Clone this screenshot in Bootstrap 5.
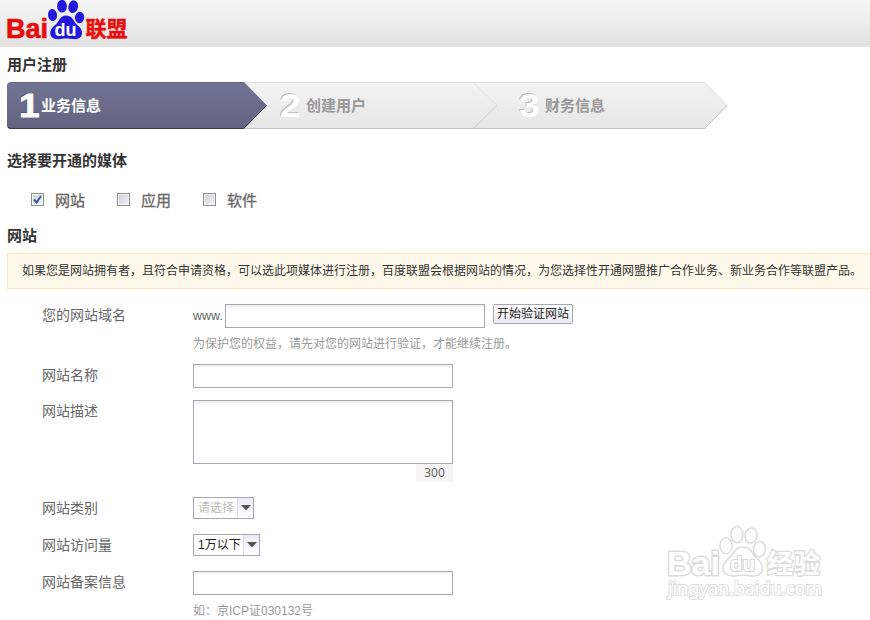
<!DOCTYPE html>
<html lang="zh-CN">
<head>
<meta charset="utf-8">
<title>百度联盟 - 用户注册</title>
<link href="https://cdn.jsdelivr.net/npm/bootstrap@5.3.0/dist/css/bootstrap.min.css" rel="stylesheet">
<style>
body{font-family:"Liberation Sans","Noto Sans CJK SC",sans-serif;font-size:12px;line-height:18px;color:#333;background:#fff;overflow:hidden;height:620px}
.masthead{height:47px;background:linear-gradient(#f6f6f6,#e2e2e2)}
.masthead svg,.watermark svg,.steps svg{display:block}
.page-body{padding-left:7px}
.heading{font-size:15px;line-height:20px;font-weight:700;margin:0;color:#333}
.page-title{padding-top:8px}
.steps{width:721px;height:47px;margin-top:7px}
.steps>*{grid-area:1/1}
.step-labels{height:47px;font-size:15px;font-weight:700;color:#999}
.step-item{height:47px;width:239px}
.step-item.current{width:273px;padding-left:12px;color:#fff}
.step-num{font-size:33px;line-height:47px;font-weight:700;width:26px;transform:scaleX(1.12);transform-origin:left;color:#fff;text-shadow:-1px -1px 0 #bbb}
.step-item.current .step-num{width:22px;-webkit-text-stroke:.8px #fff;text-shadow:-1px -1px 0 #4c4e6c}
.media-list{padding-left:24px;margin-top:20px;height:20px}
.media-list label{width:86px;height:20px;font-size:15px;line-height:20px;color:#666;-webkit-text-stroke:.3px #666}
.box{width:13px;height:13px;margin:0 11px 3px 0;border:1px solid #8e8f8f;background:linear-gradient(135deg,#c8cdd6,#f6f6f6);box-shadow:inset 0 0 0 1px #f4f4f4;display:grid;place-items:center}
.notice{margin-top:7px;height:36px;background:#fff9ec;border:1px solid #f5e8b3;border-right:0;padding-left:14px;line-height:35px;white-space:nowrap}
.field-row{padding-left:35px;margin-top:15px}
.field-row.tight{margin-top:12px}
.field-name{width:151px;font-size:14px;line-height:22px;color:#666;flex:none}
.text-field{display:block;width:260px;height:24px;border:1px solid #a5a8b3;border-radius:0;background:#fff;box-shadow:inset 0 2px 1px #f1f1f2;padding:2px 5px;resize:none;outline:0}
.text-field.tall{height:64px}
.prefix{font-size:12.500px;line-height:24px;width:32px;color:#666}
.verify{height:20px;width:80px;margin-left:8px;padding:0;font-size:12px;line-height:18px;border:1px solid #a5a8b3;border-radius:2px;background:linear-gradient(#fff,#ebebee);color:#222}
.hint{color:#999;line-height:18px;height:17px;margin-top:7px}
.counter{width:37px;height:18px;background:#f4f4f4;color:#666;font-family:"Noto Sans",sans-serif;line-height:18px}
.picker{height:22px;width:67px;border:1px solid #a5a8b3;line-height:21px;padding-left:4px;color:#222}
.picker.empty{width:61px;color:#bbb}
.picker-arrow{width:16px;height:20px;border-left:1px solid #d7dae6;background:linear-gradient(#e8ebf7,#fff)}
.watermark{position:absolute;left:660px;top:520px}
</style>
<script src="https://cdn.jsdelivr.net/npm/bootstrap@5.3.0/dist/js/bootstrap.bundle.min.js"></script>
</head>
<body>
<header class="masthead">
<svg width="140" height="47" role="img" aria-label="百度联盟">
<g font-family="Liberation Sans, sans-serif" font-weight="700">
<text x="6" y="38" font-size="27.500" fill="#e60d0d" stroke="#e60d0d" stroke-width=".7" textLength="42" lengthAdjust="spacingAndGlyphs">Bai</text>
<g fill="#2319dc"><ellipse cx="52.500" cy="15" rx="4.500" ry="6" transform="rotate(-8 52.500 15)"/><ellipse cx="62" cy="6.200" rx="4.900" ry="6.300"/><ellipse cx="73.200" cy="6.700" rx="4.800" ry="6.400" transform="rotate(12 73.200 6.700)"/><ellipse cx="79.600" cy="17.500" rx="4.600" ry="5.700" transform="rotate(8 79.600 17.500)"/>
<path d="M66 15.500C71.500 15.500 73.500 20 75 22.500C77 25.500 82 27.500 82 33C82 37 79 39.200 75 39.200C71 39.200 69 38.500 66 38.500S62 39.200 58 39.200C53 39.200 50.300 37 50.300 33C50.300 27.500 55 26 57.500 22.500C59.500 19.500 61 15.500 66 15.500Z"/></g>
<text x="54.500" y="35.500" font-size="18.500" fill="#fff" textLength="22" lengthAdjust="spacingAndGlyphs">du</text></g>
<text x="85.500" y="36" font-family="Noto Sans CJK SC" font-weight="700" font-size="21" fill="#e60d0d" stroke="#e60d0d" stroke-width=".5" textLength="42">联盟</text>
</svg>
</header>
<main class="page-body">
<h1 class="heading page-title">用户注册</h1>
<div class="steps d-grid">
<svg width="721" height="48" aria-hidden="true">
<defs><linearGradient id="dim" x2="0" y2="1"><stop stop-color="#f3f3f3"/><stop offset="1" stop-color="#e6e6e6"/></linearGradient><linearGradient id="lit" x2="0" y2="1"><stop stop-color="#727494"/><stop offset="1" stop-color="#61637f"/></linearGradient></defs>
<path d="M230 0H698L720.500 23.500 698 47H230z" fill="url(#dim)"/>
<path d="M230 .5H697.500L720 23.500" fill="none" stroke="#e2e2e2"/><path d="M230 46.500H697.500L720 23.500" fill="none" stroke="#c4c4c4"/>
<path d="M467 1l23 22.500" fill="none" stroke="#e2e2e2"/><path d="M490 23.500L467 46" fill="none" stroke="#d0d0d0"/>
<path d="M4 0H237L260 23.500 237 47H4Q0 47 0 43V4Q0 0 4 0z" fill="url(#lit)"/>
<path d="M1 45Q2 46.500 4 46.500H236.500L259.500 23.500" fill="none" stroke="#393b58"/><path d="M4 .5H236.500" stroke="#666887"/>
</svg>
<div class="step-labels d-flex">
<div class="step-item current d-flex align-items-center"><span class="step-num">1</span><span>业务信息</span></div>
<div class="step-item d-flex align-items-center"><span class="step-num">2</span><span>创建用户</span></div>
<div class="step-item d-flex align-items-center"><span class="step-num">3</span><span>财务信息</span></div>
</div>
</div>
<h2 class="heading" style="margin-top:22px">选择要开通的媒体</h2>
<div class="media-list d-flex">
<label class="d-flex align-items-center"><span class="box"><svg width="9" height="9"><path d="M1 4.500L3.500 7.500 8 1" fill="none" stroke="#3c55a5" stroke-width="2"/></svg></span>网站</label>
<label class="d-flex align-items-center"><span class="box"></span>应用</label>
<label class="d-flex align-items-center"><span class="box"></span>软件</label>
</div>
<h2 class="heading" style="margin-top:15px">网站</h2>
<div class="notice">如果您是网站拥有者，且符合申请资格，可以选此项媒体进行注册，百度联盟会根据网站的情况，为您选择性开通网盟推广合作业务、新业务合作等联盟产品。</div>
<form>
<div class="field-row d-flex"><div class="field-name">您的网站域名</div>
<div><div class="d-flex"><span class="prefix">www.</span><input class="text-field" aria-label="您的网站域名"><button type="button" class="verify">开始验证网站</button></div><div class="hint">为保护您的权益，请先对您的网站进行验证，才能继续注册。</div></div></div>
<div class="field-row tight d-flex"><div class="field-name">网站名称</div><input class="text-field" aria-label="网站名称"></div>
<div class="field-row tight d-flex"><div class="field-name">网站描述</div><div><textarea class="text-field tall" aria-label="网站描述"></textarea><div class="counter ms-auto text-center">300</div></div></div>
<div class="field-row d-flex"><div class="field-name">网站类别</div><div class="picker empty d-flex justify-content-between">请选择<span class="picker-arrow d-flex align-items-center justify-content-center"><svg width="10" height="6"><path d="M0 0H10L5 5.500z" fill="#555"/></svg></span></div></div>
<div class="field-row d-flex"><div class="field-name">网站访问量</div><div class="picker d-flex justify-content-between">1万以下<span class="picker-arrow d-flex align-items-center justify-content-center"><svg width="10" height="6"><path d="M0 0H10L5 5.500z" fill="#555"/></svg></span></div></div>
<div class="field-row d-flex"><div class="field-name">网站备案信息</div><div><input class="text-field" aria-label="网站备案信息"><div class="hint">如：京ICP证030132号</div></div></div>
</form>
</main>
<div class="watermark" aria-hidden="true">
<svg width="180" height="90" fill="#fff" stroke="#dcdcdc">
<g font-family="Liberation Sans, sans-serif" font-weight="700">
<text x="7" y="54.500" font-size="34" stroke-width="3" paint-order="stroke" textLength="53" lengthAdjust="spacingAndGlyphs">Bai</text>
<g stroke-width="1.500"><ellipse cx="66" cy="25.700" rx="6" ry="8"/><ellipse cx="77" cy="14.700" rx="6" ry="8.200"/><ellipse cx="91" cy="15.500" rx="6" ry="7.600" transform="rotate(12 91 15.500)"/><ellipse cx="99.500" cy="29" rx="6" ry="7.700"/>
<path d="M83 27C90 27 92 32 94 35.500C96 38.500 102.500 41 102.500 48C102.500 53 99 56 94 56C90 56 87 55 83 55S77 56 73 56C67 56 63 53 63 48C63 41 69 39 72 35C74 31 77 27 83 27Z"/></g>
<text x="70" y="51" font-size="21" stroke="#d4d4d4" stroke-width="2.200" paint-order="stroke" textLength="25" lengthAdjust="spacingAndGlyphs">du</text></g>
<text x="107" y="53" font-family="Noto Sans CJK SC" font-weight="700" font-size="26" stroke-width="2.600" paint-order="stroke" textLength="53">经验</text>
<text x="8" y="75" font-family="Noto Sans, sans-serif" font-size="18" stroke="#e2e2e2" stroke-width="2.200" paint-order="stroke" textLength="154" lengthAdjust="spacingAndGlyphs">jingyan.baidu.com</text>
</svg>
</div>
</body>
</html>
